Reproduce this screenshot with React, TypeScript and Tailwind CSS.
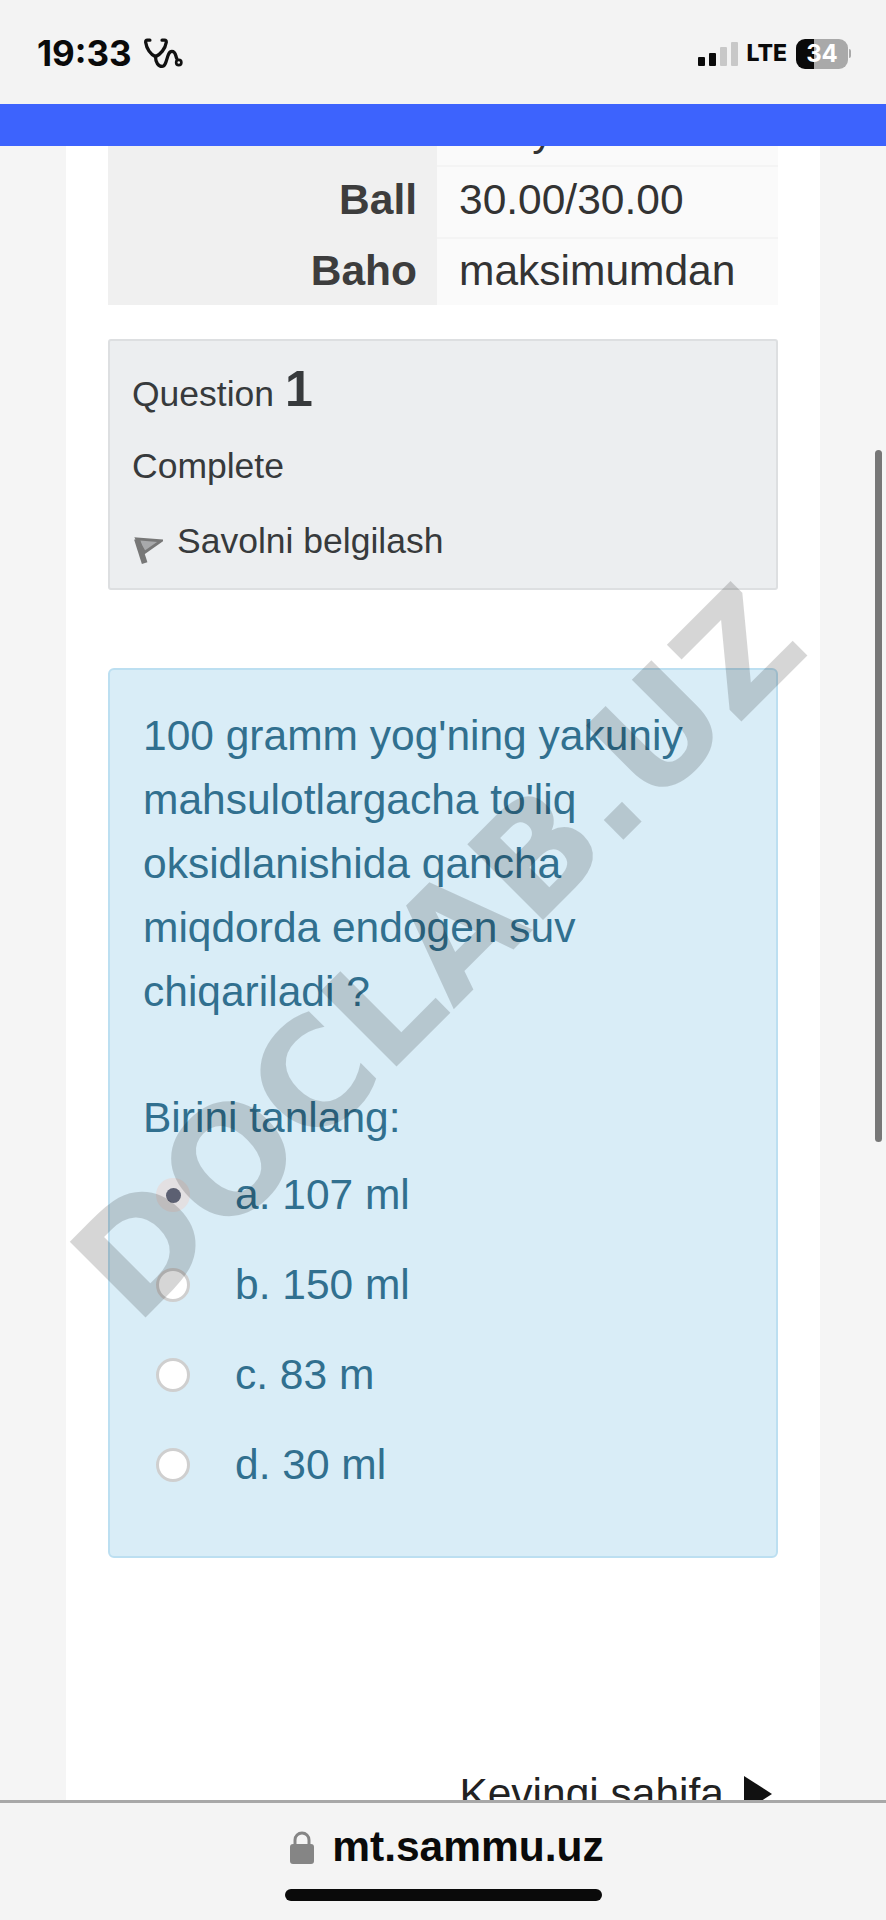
const options = [
  { label: 'a. 107 ml', checked: true },
  { label: 'b. 150 ml', checked: false },
  { label: 'c. 83 m', checked: false },
  { label: 'd. 30 ml', checked: false },
];

function Stethoscope() {
  return (
    <svg viewBox="370 55 122 95" className="w-[40px] h-[33px]" fill="none" stroke="#111" strokeWidth="10" strokeLinecap="round">
      <path d="M388 62 H380 C376 62 375 64 375 68 C378 88 390 106 405 112 C420 106 435 88 438 68 C438 64 437 62 433 62 H425" />
      <path d="M405 112 C405 130 414 142 425 142 C442 142 438 96 455 96 C467 96 466 110 470 118" />
      <circle cx="476" cy="130" r="8" strokeWidth="8" />
    </svg>
  );
}

function StatusBar() {
  return (
    <div className="h-[104px] shrink-0 bg-[#f3f3f3] flex items-center justify-between pl-[37px] pr-[35px] pt-[3px] font-['Inter',sans-serif] text-[#0a0a0a]">
      <div className="flex items-center gap-[12px]">
        <span className="text-[35px] font-bold leading-none">19:33</span>
        <Stethoscope />
      </div>
      <div className="flex items-center">
        <div className="flex items-end gap-[4px] h-[24px]">
          <div className="w-[7px] h-[9px] bg-[#0a0a0a] rounded-[1px]" />
          <div className="w-[7px] h-[13px] bg-[#0a0a0a] rounded-[1px]" />
          <div className="w-[7px] h-[19px] bg-[#c8c8c8] rounded-[1px]" />
          <div className="w-[7px] h-[24px] bg-[#c8c8c8] rounded-[1px]" />
        </div>
        <span className="ml-[8px] text-[23px] font-extrabold leading-none">LTE</span>
        <div className="ml-[9px] w-[52px] h-[30px] rounded-[9px] bg-[linear-gradient(to_right,#0a0a0a_34%,#a9a9a9_34%)] flex items-center justify-center text-white text-[24px] font-bold leading-none">
          34
        </div>
        <div className="ml-[1px] w-[2px] h-[9px] rounded-r-[2px] bg-[#a9a9a9]" />
      </div>
    </div>
  );
}

function FlagIcon() {
  return (
    <svg viewBox="0 0 30 30" className="ml-[2px] w-[29px] h-[29px] mt-[19px]" fill="none" stroke="#777" strokeWidth="3">
      <path d="M3 3 L28 5 L11 17 Z" fill="#a8a9ab" />
      <path d="M3 3 L11 28" strokeWidth="6" />
    </svg>
  );
}

function SummaryTable() {
  return (
    <div className="grid grid-cols-[329px_341px] text-[42.5px] leading-none text-[#333]">
      <div className="h-[19px] bg-[#f0f0f0]" />
      <div className="h-[19px] overflow-hidden bg-[#fafafa] pl-[22px]">
        <span className="block -translate-y-[36px]">Savy</span>
      </div>
      <div className="h-[72px] pb-[3px] bg-[#f0f0f0] border-t-2 border-[#f0f0f0] flex items-center justify-end pr-[20px] font-bold text-[#3d3d3d]">Ball</div>
      <div className="h-[72px] pb-[3px] bg-[#fafafa] border-t-2 border-[#f4f4f4] flex items-center pl-[22px]">30.00/30.00</div>
      <div className="h-[68px] pb-[1px] bg-[#f0f0f0] border-t-2 border-[#f0f0f0] flex items-center justify-end pr-[20px] font-bold text-[#3d3d3d]">Baho</div>
      <div className="h-[68px] pb-[1px] bg-[#fafafa] border-t-2 border-[#f4f4f4] flex items-center pl-[22px]">maksimumdan</div>
    </div>
  );
}

function QuestionInfo() {
  return (
    <div className="mt-[34px] h-[251px] bg-[#eceef0] border-2 border-[#dddfe1] rounded-[3px] pl-[22px] text-[35.5px] text-[#373a3c]">
      <div className="flex items-baseline h-[80px] pt-[23px]">
        <span>Question</span>
        <span className="ml-[11px] text-[50px] font-bold leading-none">1</span>
      </div>
      <div className="mt-[21px] leading-[48px]">Complete</div>
      <div className="mt-[27px] flex items-start gap-[14px] leading-[48px]">
        <FlagIcon />
        <span>Savolni belgilash</span>
      </div>
    </div>
  );
}

function QuestionCard() {
  return (
    <div className="mt-[78px] h-[890px] bg-[#d9edf7] border-2 border-[#bcdff1] rounded-[6px] px-[33px] pt-[34px] text-[#31708f] text-[42.5px] leading-[64px]">
      <p className="w-[600px]">100 gramm yog'ning yakuniy mahsulotlargacha to'liq oksidlanishida qancha miqdorda endogen suv chiqariladi ?</p>
      <p className="mt-[62px]">Birini tanlang:</p>
      <div className="flex flex-col">
        {options.map(opt => (
          <div key={opt.label} className="h-[90px] flex items-center">
            {opt.checked ? (
              <div className="ml-[13px] w-[34px] h-[34px] rounded-full bg-[#e3e0e2] flex items-center justify-center">
                <div className="w-[15px] h-[15px] rounded-full bg-[#5c6072]" />
              </div>
            ) : (
              <div className="ml-[13px] w-[34px] h-[34px] rounded-full bg-white border-[3px] border-[#cfcfcf]" />
            )}
            <span className="ml-[45px]">{opt.label}</span>
          </div>
        ))}
      </div>
    </div>
  );
}

function BottomBar() {
  return (
    <div className="h-[120px] shrink-0 bg-[#f4f4f4] border-t-[3px] border-[#a8a8a8] flex flex-col items-center">
      <div className="mt-[25px] pl-[8px] h-[38px] flex items-center gap-[18px]">
        <svg viewBox="0 0 24 33" className="w-[24px] h-[33px]">
          <path d="M5 14 V9 a7 7 0 0 1 14 0 V14" fill="none" stroke="#858585" strokeWidth="3" />
          <rect x="0" y="13" width="24" height="20" rx="3" fill="#858585" />
        </svg>
        <span className="text-[42.5px] font-bold leading-none text-[#0a0a0a]">mt.sammu.uz</span>
      </div>
      <div className="mt-[23px] w-[317px] h-[12px] rounded-full bg-[#0a0a0a]" />
    </div>
  );
}

export default function App() {
  return (
    <div className="relative w-[886px] h-[1920px] overflow-hidden flex flex-col bg-[#f5f5f5] font-['Liberation_Sans',Arial,sans-serif]">
      <StatusBar />
      <div className="h-[42px] shrink-0 bg-[#3d63fd]" />

      <div className="flex-1 min-h-0 overflow-hidden px-[66px]">
        <div className="bg-white h-[1700px] px-[42px]">
          <SummaryTable />
          <QuestionInfo />
          <QuestionCard />
          <div className="mt-[211px] pr-[6px] flex items-center justify-end gap-[20px] text-[42.5px] leading-[50px] text-[#222]">
            <span>Kevingi sahifa</span>
            <svg viewBox="0 0 28 36" className="w-[28px] h-[36px]">
              <path d="M0 0 L28 18 L0 36 Z" fill="#111" />
            </svg>
          </div>
        </div>
      </div>

      <BottomBar />

      {/* scrollbar + watermark sit on top of the page */}
      <div className="absolute left-[136px] top-[1203px] origin-[0_124px] -rotate-45 whitespace-nowrap font-['DejaVu_Sans',sans-serif] text-[147px] leading-none font-bold text-black/[0.16] pointer-events-none">
        DOCLAB.UZ
      </div>
      <div className="absolute left-[875px] top-[450px] w-[7px] h-[692px] rounded-full bg-[#777]" />
    </div>
  );
}
